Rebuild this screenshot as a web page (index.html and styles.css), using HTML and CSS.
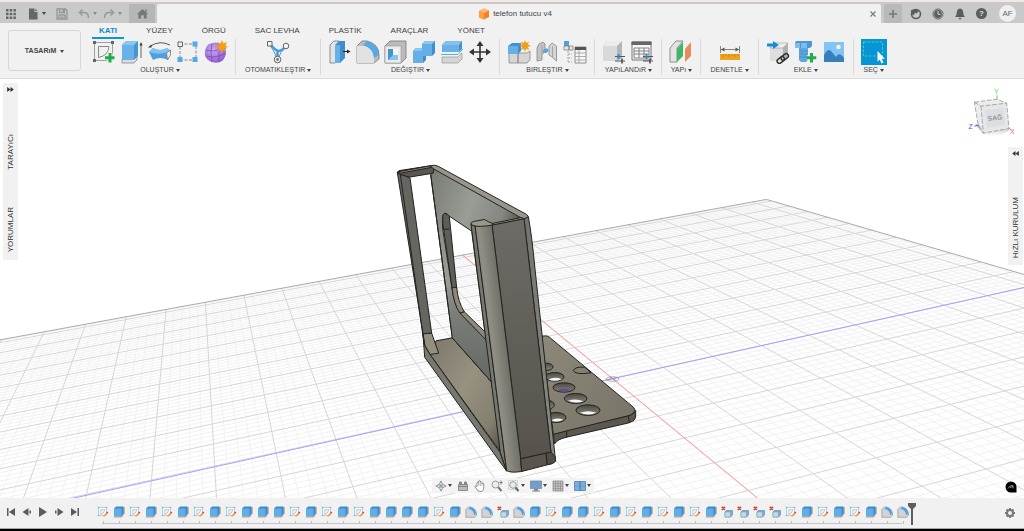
FILE: index.html
```html
<!DOCTYPE html>
<html lang="tr">
<head>
<meta charset="utf-8">
<title>telefon tutucu v4</title>
<link rel="stylesheet" href="styles.css">
</head>
<body>
<svg class="defs" aria-hidden="true">
  <defs>
    <radialGradient id="gPurple" cx=".4" cy=".35" r=".8"><stop offset="0" stop-color="#c9a6f2"/><stop offset="1" stop-color="#8454c4"/></radialGradient>
  </defs>
  <symbol id="sketch" viewBox="0 0 24 24"><path d="M2.500 2.500H20.500V20.500H2.500Z" fill="none" stroke="#8b8b8b" stroke-width=".8"/><path d="M6.500 6.500H17Q16.500 15.500 6.500 17.500Z" fill="none" stroke="#888"/><path d="M1 1h3v3h-3zM19 1h3v3h-3zM1 19h3v3h-3z" fill="#666"/><path d="M18 13v9.500M13 17.800h9.500" stroke="#f1f1f1" stroke-width="5"/><path d="M18 13v9.500M13 17.800h9.500" stroke="#22aa4f" stroke-width="3"/></symbol>
  <symbol id="extrude" viewBox="0 0 24 24"><path d="M2 19L7 16H17V20L14 23H2Z" fill="#dcdcdc" stroke="#888" stroke-width=".8"/><path d="M2 5L6 1H18V16L14 20H2Z" fill="#4796d2"/><path d="M2 5H14V20H2Z" fill="#69b1e8"/><path d="M2 5L6 1H18L14 5Z" fill="#8cc7f2"/><path d="M21 18V5" stroke="#444" stroke-width=".8"/><path d="M21 2l1.500 3.500h-3z" fill="#333"/></symbol>
  <symbol id="revolve" viewBox="0 0 24 24"><path d="M2.500 6Q12 0 22 5" fill="none" stroke="#444" stroke-width=".9"/><path d="M0 7.500l3.500-3v3z" fill="#333"/><path d="M1 12L5 8Q12 12 19 8L23 11L20 20Q12 16 5 20Z" fill="#4e9fda"/><path d="M1 12L5 8Q12 12 19 8L22 11Q12 16 1 12Z" fill="#83c2f0"/><path d="M18.500 13L22.500 10V15L19.500 20Z" fill="#eee" stroke="#777" stroke-width=".8"/></symbol>
  <symbol id="pattern" viewBox="0 0 24 24"><path d="M4 4H20V20H4Z" fill="none" stroke="#888" stroke-dasharray="3 1.500"/><path d="M2 2h4.500v4.500H2z" fill="#f1f1f1" stroke="#666"/><path d="M16.500 1.500h5v5h-5zM1.500 17h5v5h-5zM16.500 17h5v5h-5z" fill="#55a9e4"/></symbol>
  <symbol id="form" viewBox="0 0 24 24"><path d="M5 4Q11 1 18 4Q22 6 22 13Q21 20 16 22Q9 24 4 20Q0 17 1 11Q2 6 5 4Z" fill="url(#gPurple)"/><path d="M2 10Q9 12 15 10L22 8M15 4V22M8 4Q6 12 8 22M2 16Q9 18 15 16L21 14" fill="none" stroke="#7343b5" stroke-width=".7"/><path d="M18 0l1.400 3.500L23 2l-1.500 3.500L24 7l-3.400 1 1.400 3.500-3-1.500-1 3-1.300-3-3.200 1.500 1.500-3.500-3.500-1 3.500-1.500L13 2l3.600 1.500z" fill="#f59e14"/></symbol>
  <symbol id="auto" viewBox="0 0 24 24"><path d="M4 4Q9 10 12 11Q16 11 20 6M11.500 11V20" fill="none" stroke="#4b9bd6" stroke-width="2.500"/><path d="M4 5Q9 12 11 19M20 7Q14 12 12 19" fill="none" stroke="#4b9bd6" stroke-width="1"/><path d="M1.500 1.500h4.500v4.500h-4.500z" fill="#f5f5f5" stroke="#666"/><circle cx="20" cy="6" r="2.800" fill="#f5f5f5" stroke="#666"/><circle cx="11.500" cy="19.500" r="3.300" fill="#eee" stroke="#666"/><circle cx="11.500" cy="19.500" r="1.400" fill="#777"/></symbol>
  <symbol id="presspull" viewBox="0 0 24 24"><path d="M2 5L6 1H11V19L7 23H2Z" fill="#e4e4e4" stroke="#777" stroke-width=".8"/><path d="M7 5L11 1H17V18L12 23H7Z" fill="#3f8fcf"/><path d="M7 5H12V23H7Z" fill="#67b0e8"/><path d="M15 11.500H20" stroke="#222"/><path d="M19 9.500l3.500 2-3.500 2z" fill="#222"/></symbol>
  <symbol id="fillet" viewBox="0 0 24 24"><path d="M1 6L6 1H11Q23 4 23 15V19L18 23H1Z" fill="#bdbdbd" stroke="#777" stroke-width=".8"/><path d="M1 6H9Q18 8 18 16V23H1Z" fill="#e2e2e2"/><path d="M7 5L11 1Q22 4 23 15L18 18Q17 8 7 5Z" fill="#58a8e3"/></symbol>
  <symbol id="shell" viewBox="0 0 24 24"><path d="M1 6L6 1H22V18L17 23H1Z" fill="#bbb" stroke="#777" stroke-width=".8"/><path d="M1 6H17V23H1Z" fill="#ebebeb" stroke="#999" stroke-width=".6"/><path d="M4 9H14V20H4Z" fill="#4594d2"/><path d="M9 9H14V15H9Z" fill="#f6f6f6"/><path d="M4 20L9 15H14V20Z" fill="#86c3ef"/></symbol>
  <symbol id="combine" viewBox="0 0 24 24"><path d="M10 4L13 1H23V13L20 16H14V20L11 23H1V11L4 8H10Z" fill="#3f8fce"/><path d="M10 4H20V16H11V23H1V11H10Z" fill="#66afe6"/><path d="M10 4L13 1H23L20 4ZM1 11L4 8H10V11Z" fill="#8ac6f2"/></symbol>
  <symbol id="split" viewBox="0 0 24 24"><path d="M2 5L6 1H22V9L19 12H2Z" fill="#458fcc"/><path d="M2 5H19V12H2Z" fill="#69b1e8"/><path d="M2 5L6 1H22L19 5Z" fill="#83c1ef"/><path d="M1 14.500H18L23 9" fill="none" stroke="#5baae4"/><path d="M2 17H18L22 13V19L18 23H2Z" fill="#d5d5d5" stroke="#999" stroke-width=".7"/></symbol>
  <symbol id="move" viewBox="0 0 24 24"><path d="M12 4V20M4 12H20" stroke="#333" stroke-width="1.600"/><path d="M12 1l3.500 5H8.500zM12 23l3.500-5H8.500zM1 12l5-3.500v7zM23 12l-5-3.500v7z" fill="#333"/></symbol>
  <symbol id="newcomp" viewBox="0 0 24 24"><path d="M2 13H11V23H2ZM11 13H20L23 11V20L20 23H11Z" fill="#d6d6d6" stroke="#888" stroke-width=".8"/><path d="M1 6L5 3H14V11L11 14H1Z" fill="#3f91d0"/><path d="M1 6H11V14H1Z" fill="#66b0e8"/><path d="M18 0l1.200 3 3-1.500-1.400 3 3.200 1.300-3.200 1.200 1.400 3-3-1.300L18 12l-1.200-3.300-3 1.300 1.300-3L12 5.800l3.100-1.300-1.300-3 3 1.500z" fill="#f0a01e"/></symbol>
  <symbol id="joint" viewBox="0 0 24 24"><path d="M2 8Q3 3 8 2L10 4V12L7 14V20L2 21Z" fill="#c4c4c4" stroke="#888" stroke-width=".8"/><path d="M21.500 6L17 3L14 6V15L17 17L21.500 21Z" fill="#d4d4d4" stroke="#888" stroke-width=".8"/><path d="M7 5V14M17.500 6V17" stroke="#999" stroke-width=".8"/><path d="M8 10L12 8L14 11L11 13L8 13Z" fill="#59a6e0"/></symbol>
  <symbol id="bom" viewBox="0 0 24 24"><path d="M1 1h5v5H1z" fill="#4ea2de"/><path d="M1 6h5v4H1zM6 6h4v4H6z" fill="#e5e5e5" stroke="#777" stroke-width=".7"/><path d="M5 11V23M5 14H9M5 18H9M5 22H9" stroke="#999" stroke-width=".8" stroke-dasharray="2 1"/><path d="M12 7H23V23H12Z" fill="#f7f7f7" stroke="#777" stroke-width=".8"/><path d="M12 7H23V10H12Z" fill="#555"/><path d="M12 13H23M12 16.500H23M12 20H23M16 10V23" stroke="#999" stroke-width=".8"/></symbol>
  <symbol id="params" viewBox="0 0 24 24"><path d="M1 6L5 1H20V18L15 21H1Z" fill="#b5b5b5"/><path d="M1 6H15V21H1Z" fill="#d9d9d9"/><path d="M1 6L5 1H20L15 6Z" fill="#ececec"/><path d="M13 16.500H23M13 21H23" stroke="#555" stroke-width="1.200"/><path d="M16.500 14v5" stroke="#258fd4" stroke-width="2"/><path d="M20 18.500v5" stroke="#444" stroke-width="1.500"/></symbol>
  <symbol id="ptable" viewBox="0 0 24 24"><path d="M2 2H21V20H2Z" fill="#f7f7f7" stroke="#666" stroke-width=".9"/><path d="M1.500 1.500H21.500V5H1.500Z" fill="#666"/><path d="M4 8H19V18H4ZM4 11H19M4 14H19M9 8V18M14 8V18" fill="none" stroke="#777" stroke-width=".9"/><path d="M13 16.500H23M13 21H23" stroke="#555" stroke-width="1.200"/><path d="M16.500 14v5" stroke="#258fd4" stroke-width="2"/><path d="M20 18.500v5" stroke="#444" stroke-width="1.500"/></symbol>
  <symbol id="plane" viewBox="0 0 24 24"><path d="M1 8L7 1H14L8 8V22H1Z" fill="#e4e4e4" stroke="#777" stroke-width=".8"/><path d="M8 9L14 2V16L8 22Z" fill="#3cb765"/><path d="M16 9L22 2V16L16 22Z" fill="#e58d5a"/></symbol>
  <symbol id="measure" viewBox="0 0 24 24"><path d="M2.500 6V13M21.500 6V13M3 9.500H21" stroke="#777" stroke-width=".9"/><path d="M3 9.500l3.500-2v4zM21 9.500l-3.500-2v4z" fill="#555"/><path d="M2 14H22V20H2Z" fill="#f0a31c"/><path d="M5 14v3M8 14v2M11 14v3M14 14v2M17 14v3M20 14v2" stroke="#b67b10" stroke-width=".8"/></symbol>
  <symbol id="insert" viewBox="0 0 24 24"><path d="M4 8L8 3H22V16L17 21H4Z" fill="#b2b2b2"/><path d="M4 8H17V21H4Z" fill="#dedede"/><path d="M4 8L8 3H22L17 8Z" fill="#eee" stroke="#999" stroke-width=".6"/><path d="M1 5H8" stroke="#178cdb" stroke-width="3"/><path d="M7 1l6 4-6 4z" fill="#178cdb"/><g fill="none" stroke="#333" stroke-width="1.500" transform="rotate(-38 17 18)"><rect x="10" y="16" width="8" height="4.500" rx="2.200"/><rect x="15" y="16" width="8" height="4.500" rx="2.200"/></g></symbol>
  <symbol id="bolt" viewBox="0 0 24 24"><path d="M1 2L3 1H18V6L16 8H1Z" fill="#4a98d4"/><path d="M1 3H6V8H1ZM7 3H13V8H7Z" fill="#7cbdec"/><path d="M5 8H14V20L12 22H7L5 20Z" fill="#5ca8e1"/><path d="M5 11h9M5 14h9M5 17h9" stroke="#3f8bc8" stroke-width=".8"/><path d="M17.500 13v9.500M13 17.800h9.500" stroke="#f1f1f1" stroke-width="5"/><path d="M17.500 13v9.500M12.800 17.800h9.500" stroke="#22aa4f" stroke-width="3"/></symbol>
  <symbol id="image" viewBox="0 0 24 24"><path d="M2 2H22V22H2Z" fill="#81c4fa"/><path d="M2 15Q6 8 9 11L14 17Q17 11 22 18V22H2Z" fill="#367fb9"/><circle cx="16.500" cy="7" r="2.300" fill="#fff3c4"/></symbol>
  <symbol id="select" viewBox="0 0 26 26"><path d="M0 0H26V26H0Z" fill="#0696d7"/><path d="M2.500 3H21.500V17H2.500Z" fill="none" stroke="#55c8a0" stroke-dasharray="2.500 1.500"/><path d="M16.500 12V22.500L18.800 20.500L20.500 24.500L22.500 23.500L20.700 19.700H23.800Z" fill="#fff"/></symbol>

  <symbol id="t-s" viewBox="0 0 12 12"><path d="M1.500 1.500H9.500V9.500H1.500Z" fill="#f8fbfe" stroke="#8fc0e2" stroke-width=".7"/><path d="M3.800 3.800H7.800Q7 7.500 3.800 8.500Z" fill="none" stroke="#999" stroke-width=".6"/><path d="M6.500 10.500L10 6.800" stroke="#f5a623" stroke-width="1.600"/><path d="M9.700 7.200L10.800 6" stroke="#dd4535" stroke-width="1.600"/><path d="M.8.800h1.500v1.500H.8zM8.700.8h1.500v1.500H8.700zM.8 8.700h1.500v1.500H.8z" fill="#7fb7dd"/></symbol>
  <symbol id="t-e" viewBox="0 0 12 12"><path d="M1 9.500H8L10.500 8V9.500L8.500 11.500H1Z" fill="#aaa"/><path d="M1 2.500L3 .5H10.500V8L8.500 10H1Z" fill="#3e8bc8"/><path d="M1 2.500H8.500V10H1Z" fill="#60ade7"/><path d="M11 1V8" stroke="#555" stroke-width=".7"/></symbol>
  <symbol id="t-f" viewBox="0 0 12 12"><path d="M.8 3.500L3.500.800Q11 1.500 11.500 8V9.500L9.500 11.300H.8Z" fill="#d2d2d2" stroke="#888" stroke-width=".6"/><path d="M3.500 3L5.500.800Q11 2 11.500 8L9 9Q9 4 3.500 3Z" fill="#4ea3e0"/></symbol>
  <symbol id="t-c" viewBox="0 0 12 12"><path d="M.8.800L4 4M4 .8L.8 4" stroke="#d93b32" stroke-width="1.500"/><path d="M4 6L5.500 4.500H11.500V9L9.500 11H4Z" fill="#6ab0e1" stroke="#687f92" stroke-width=".6"/><path d="M4 6H9.500V11H4Z" fill="#bedcf1" stroke="#7890a5" stroke-width=".5"/></symbol>

  <symbol id="n-orbit" viewBox="0 0 12 12"><path d="M6 .5l1.500 2h-3zM6 11.500l1.500-2h-3zM.5 6l2-1.500v3zM11.500 6l-2-1.500v3z" fill="#888"/><ellipse cx="6" cy="6" rx="4" ry="1.800" fill="none" stroke="#999" stroke-width=".8"/><ellipse cx="6" cy="6" rx="1.800" ry="4" fill="none" stroke="#999" stroke-width=".8"/><circle cx="6" cy="6" r="1.100" fill="#4aa0df"/></symbol>
  <symbol id="n-look" viewBox="0 0 12 12"><path d="M1.500 4.500H10.500V10.500H1.500Z" fill="#bbb" stroke="#777" stroke-width=".8"/><path d="M2.500 2H4.500V4H2.500ZM7.500 2H9.500V4H7.500ZM1.500 6.500h9" stroke="#777" stroke-width=".8" fill="#999"/></symbol>
  <symbol id="n-pan" viewBox="0 0 12 12"><path d="M4 11L1 6.500Q1 5 3 6.500V2.500Q4 1.500 4.700 2.500V1Q5.500 0 6.300 1V2Q7.300 1 8 2.500V3.500Q9.500 2.500 9.800 4V8Q9.500 10 8 11.500Z" fill="#fff" stroke="#777" stroke-width=".8"/><path d="M4.700 2.500V6M6.300 2V6M8 3V6" stroke="#888" stroke-width=".6"/></symbol>
  <symbol id="n-zoom" viewBox="0 0 12 12"><path d="M7 7L10.500 11" stroke="#777" stroke-width="2"/><circle cx="4.500" cy="4.500" r="3.500" fill="#e6eef4" stroke="#999"/><path d="M10 .5v4M8.500 2.500h3" stroke="#666" stroke-width=".8"/></symbol>
  <symbol id="n-fit" viewBox="0 0 12 12"><path d="M.5.500h9v9h-9z" fill="none" stroke="#bbb" stroke-width=".8" stroke-dasharray="2 1"/><path d="M7 7L10.500 11" stroke="#666" stroke-width="2"/><circle cx="5" cy="5" r="3.300" fill="#dff0ea" stroke="#999"/></symbol>
  <symbol id="n-display" viewBox="0 0 12 12"><path d="M.5 1H11.500V8.500H.5Z" fill="#6aa0d4" stroke="#888" stroke-width=".8"/><path d="M4 9h4v1.500h2v1H2v-1h2z" fill="#888"/></symbol>
  <symbol id="n-grid" viewBox="0 0 12 12"><path d="M1 1H11V11H1Z" fill="#c4c4c4" stroke="#888" stroke-width=".8"/><path d="M3.500 1V11M6 1V11M8.500 1V11M1 3.500H11M1 6H11M1 8.500H11" stroke="#888" stroke-width=".6"/></symbol>
  <symbol id="n-views" viewBox="0 0 12 12"><path d="M.5 1.500H11.500V10.500H.5Z" fill="#79afe0" stroke="#567da2" stroke-width=".8"/><path d="M6 1.500V10.500" stroke="#4b6e91"/><path d="M1 6H11" stroke="#628db5" stroke-width=".6"/></symbol>
</svg>

<header class="titlebar">
  <div class="quick">
    <button class="q" aria-label="Veri paneli"><svg viewBox="0 0 12 12"><path d="M1 1h2.500v2.500H1zM4.700 1h2.500v2.500H4.700zM8.400 1h2.500v2.500H8.400zM1 4.700h2.500v2.500H1zM4.700 4.700h2.500v2.500H4.700zM8.400 4.700h2.500v2.500H8.400zM1 8.400h2.500v2.500H1zM4.700 8.400h2.500v2.500H4.700zM8.400 8.400h2.500v2.500H8.400z" fill="#666"/></svg></button>
    <button class="q wide" aria-label="Dosya"><svg viewBox="0 0 12 12"><path d="M2 .5H7.500V4H10.500V11.500H2Z" fill="#666"/><path d="M8.200.700L10.500 3H8.200Z" fill="#666"/></svg><i class="caret"></i></button>
    <button class="q" aria-label="Kaydet"><svg viewBox="0 0 12 12"><path d="M1 1H9.500L11 2.500V11H1ZM3.500 1V4.500H8.500V1M3 11V7H9V11" fill="none" stroke="#969696" stroke-width="1.300"/><path d="M4.500 8.500H7.500V10H4.500ZM6.500 1.500H8V4H6.500Z" fill="#969696"/></svg></button>
    <button class="q wide dim" aria-label="Geri al"><svg viewBox="0 0 12 12"><path d="M4.500 1.500L1.500 4.500L4.500 7.500M2 4.500H6.500Q10.500 5 10.500 10" fill="none" stroke="#999" stroke-width="1.500"/></svg><i class="caret"></i></button>
    <button class="q wide dim" aria-label="Yinele"><svg viewBox="0 0 12 12"><path d="M7.500 1.500L10.500 4.500L7.500 7.500M10 4.500H5.500Q1.500 5 1.500 10" fill="none" stroke="#999" stroke-width="1.500"/></svg><i class="caret"></i></button>
  </div>
  <button class="home" aria-label="Giriş"><svg viewBox="0 0 12 12"><path d="M6 1L12 6.500H10.500V11.500H7.500V8H4.500V11.500H1.500V6.500H0Z" fill="#777"/><path d="M9 1.500h1.500v3H9z" fill="#777"/></svg></button>
  <div class="doc">
    <span class="doc-name"><svg viewBox="0 0 12 12"><path d="M1 3L6 .5L11 2.500V9L6 11.500L1 9.500Z" fill="#f58220"/><path d="M1 3L6 5V11.500L1 9.500Z" fill="#ff9d45"/><path d="M1 3L6 .5L11 2.500L6 5Z" fill="#ffb878"/></svg>telefon tutucu v4</span>
    <button class="close" aria-label="Kapat"><svg viewBox="0 0 8 8"><path d="M1.500 1.500L6.500 6.500M6.500 1.500L1.500 6.500" stroke="#777" stroke-width="1.100"/></svg></button>
  </div>
  <button class="plus" aria-label="Yeni"><svg viewBox="0 0 10 10"><path d="M5 1V9M1 5H9" stroke="#777" stroke-width="1.600"/></svg></button>
  <div class="account">
    <button class="q" aria-label="Uzantılar"><svg viewBox="0 0 12 12"><circle cx="6" cy="6" r="4.500" fill="none" stroke="#5c5c5c" stroke-width="1.600"/><path d="M1 2L6 1L9 3L6.500 5.500Q4 4 4 7.500L1.500 6Z" fill="#5c5c5c"/></svg></button>
    <button class="q" aria-label="İş durumu"><svg viewBox="0 0 12 12"><circle cx="6" cy="6" r="5" fill="none" stroke="#666"/><circle cx="6" cy="6" r="3.900" fill="#5c5c5c"/><path d="M6 3V6.300H8.500" fill="none" stroke="#ddd"/></svg></button>
    <button class="q" aria-label="Bildirimler"><svg viewBox="0 0 12 12"><path d="M6 .5Q9.200 1 9.200 4.500Q9.200 7.500 11 9H1Q2.800 7.500 2.800 4.500Q2.800 1 6 .5ZM4.500 9.800H7.500Q7 11.500 6 11.500Q5 11.500 4.500 9.800Z" fill="#5c5c5c"/></svg></button>
    <button class="q help" aria-label="Yardım">?</button>
    <button class="avatar">AF</button>
  </div>
</header>

<section class="ribbon">
  <button class="workspace">TASARıM <i class="caret"></i></button>
  <div class="ribbon-main">
    <nav class="tabs">
      <button class="tab active">KATI</button><button class="tab">YÜZEY</button><button class="tab">ÖRGÜ</button><button class="tab">SAC LEVHA</button><button class="tab">PLASTİK</button><button class="tab">ARAÇLAR</button><button class="tab">YÖNET</button>
    </nav>
    <div class="groups" id="groups"></div>
  </div>
</section>

<main class="viewport">
  <svg class="scene" viewBox="0 78 1024 420" preserveAspectRatio="xMidYMid slice" aria-hidden="true">
    <defs>
      <linearGradient id="mPanel" gradientUnits="userSpaceOnUse" x1="152" y1="100" x2="430" y2="190"><stop offset="0" stop-color="#7b7d77"/><stop offset=".45" stop-color="#9a9c96"/><stop offset=".8" stop-color="#858680"/><stop offset="1" stop-color="#55544f"/></linearGradient>
      <linearGradient id="mPanelLow" x1="0" y1="0" x2="0" y2="1"><stop offset="0" stop-color="#6c6e6a" stop-opacity="0"/><stop offset=".5" stop-color="#757773"/><stop offset="1" stop-color="#666864"/></linearGradient>
      <linearGradient id="mCol" gradientUnits="userSpaceOnUse" x1="310" y1="590" x2="392" y2="580"><stop offset="0" stop-color="#77756c"/><stop offset=".35" stop-color="#918f85"/><stop offset="1" stop-color="#66675f"/></linearGradient>
      <linearGradient id="mFace" x1="0" y1="0" x2="0" y2="1"><stop offset="0" stop-color="#6c6b65"/><stop offset="1" stop-color="#57534c"/></linearGradient>
      <linearGradient id="mFloor" x1="0" y1="0" x2="1" y2="1"><stop offset="0" stop-color="#7c776a"/><stop offset=".45" stop-color="#979181"/><stop offset=".8" stop-color="#857f70"/><stop offset="1" stop-color="#544e45"/></linearGradient>
      <linearGradient id="mPlate" x1="0" y1="0" x2="1" y2="1"><stop offset="0" stop-color="#8d887a"/><stop offset="1" stop-color="#777366"/></linearGradient>
      <linearGradient id="mHole" x1="0" y1="0" x2="0" y2="1"><stop offset="0" stop-color="#4c4943"/><stop offset="1" stop-color="#8a867a"/></linearGradient>
      <linearGradient id="mSide" x1="0" y1="0" x2="1" y2="0"><stop offset="0" stop-color="#6f716c"/><stop offset="1" stop-color="#8b8d85"/></linearGradient>
    </defs>
    <path class="grid-minor" id="minor"/>
    <path class="grid-major" id="major"/>
    <path class="grid-edge" id="edge"/>
    <path class="axis-z" d="M72 498L1024 287"/>
    <path class="axis-x" d="M462 254L758 498"/>
    <g class="model" transform="translate(380 150) scale(.333333)">
      <path d="M485 557L497 556Q503 556 508 560L760 770Q772 782 750 795L560 843L520 852Z" fill="url(#mPlate)"/>
      <path d="M520 852L560 841L745 796Q766 789 767 780V800Q766 811 747 817L560 860Q532 866 524 880Z" fill="#5c5850"/>
      <path d="M560 841V860M745 797L748 816" fill="none"/>
      <path d="M633 667L614 650Q585 648 580 660Q584 674 633 667" fill="none"/>
      <g fill="url(#mHole)"><ellipse cx="500" cy="649" rx="19" ry="11"/><ellipse cx="524" cy="679" rx="28" ry="13"/><ellipse cx="552" cy="711" rx="33" ry="14"/><ellipse cx="587" cy="744" rx="34" ry="15"/><ellipse cx="624" cy="779" rx="36" ry="16"/><ellipse cx="504" cy="763" rx="19" ry="13"/><ellipse cx="528" cy="801" rx="30" ry="15"/></g>
      <g class="holes"><path d="M505 687Q525 677 545 686Q525 695 505 687ZM564 751Q588 742 610 752Q588 760 564 751ZM600 787Q625 777 649 787Q625 797 600 787ZM514 809Q530 799 550 808Q530 818 514 809Z" fill="#f5f5f5"/><path d="M532 719Q552 711 573 718Q552 727 532 719Z" fill="#55539b"/></g>
      <path d="M168 571L217 562L335 695L362 905L150 612Z" fill="url(#mFloor)"/>
      <path d="M152 72L160 52L432 203L336 224L340 695L335 695L217 562ZM188 235L216 412Q222 462 240 487L318 568L275 242L208 197Q196 183 190 192Q186 200 188 235Z" fill="url(#mPanel)" fill-rule="evenodd"/>
      <path class="soft" d="M196 400L214 400Q220 460 240 487L318 568L335 695L217 562Z" fill="url(#mPanelLow)"/>
      <path d="M217 562L335 695M152 72L217 562" fill="none"/>
      <path d="M191 236Q186 200 190 192Q196 183 208 198L230 412L216 412Z" fill="#5d5e59"/>
      <path d="M216 412L230 410Q234 454 253 484L240 488Q222 464 216 412Z" fill="#8d887b"/>
      <path d="M240 488L253 484L316 545L318 568Z" fill="#8d897c"/>
      <path d="M190 236L208 236" fill="none"/>
      <path d="M52 66L90 82L155 548L129 550Z" fill="#656660"/>
      <path d="M61 72L133 585" fill="none"/>
      <path d="M129 550L155 548L176 608L150 612L135 585Z" fill="#958f80"/>
      <path d="M129 550L134 585L150 612L360 906L380 962L134 620Z" fill="#77786f"/>
      <path d="M52 66Q53 61 60 60L150 46L162 52L160 68L88 80L58 71Z" fill="#595750"/>
      <path d="M54 64L150 46L158 50L62 68Z" fill="#8d897c"/>
      <path d="M150 46Q164 42 174 47L440 192Q448 198 442 204L432 207L162 56Z" fill="#98968a"/>
      <path d="M336 219L424 201L432 205L336 225Z" fill="#918d80"/>
      <path d="M432 205L445 199Q455 250 465 355L526 925L513 905Z" fill="url(#mSide)"/>
      <path d="M336 224L432 205L513 905L422 925Z" fill="url(#mFace)"/>
      <path d="M273 220L286 228L380 962L361 906Z" fill="#777970"/>
      <path d="M285 226L336 222L422 925L425 963Q390 968 380 960Z" fill="url(#mCol)"/>
      <path d="M273 222Q272 214 281 213L313 207L326 214L338 219L336 224Q295 230 283 226Z" fill="#9b9789"/>
      <path d="M422 925L498 908L502 943L425 963Z" fill="#59554d"/>
      <path d="M498 908L513 905L525 918L527 932Q520 941 502 943Z" fill="#504d46"/>
    </g>
    <g fill="none" stroke="#8c8aa0" stroke-width=".7"><ellipse cx="612.500" cy="378.500" rx="6.500" ry="2.200"/><path d="M607 379.500L617 377M610 376.500L616 380"/></g>
  </svg>

  <aside class="rail rail-left">
    <button class="arrows" aria-label="Genişlet"><svg viewBox="0 0 8 6"><path d="M0 0L4 3L0 6ZM4 0L8 3L4 6Z" fill="#333"/></svg></button>
    <button class="vert">TARAYıCı</button>
    <button class="vert">YORUMLAR</button>
  </aside>
  <aside class="rail rail-right">
    <button class="arrows" aria-label="Genişlet"><svg viewBox="0 0 8 6"><path d="M8 0L4 3L8 6ZM4 0L0 3L4 6Z" fill="#333"/></svg></button>
    <button class="vert">HıZLı KURULUM</button>
  </aside>

  <svg class="cube" viewBox="130 15 150 155" role="img" aria-label="Görünüm küpü">
    <defs><linearGradient id="cubeShade" x1="0" y1="0" x2="0" y2="1"><stop offset="0" stop-color="#888" stop-opacity=".8"/><stop offset="1" stop-color="#bbb" stop-opacity="0"/></linearGradient></defs>
    <path d="M155 130L178 160Q215 176 258 147L250 130Z" fill="url(#cubeShade)"/>
    <path d="M220 54V42" stroke="#5be05b" stroke-width="3"/><path d="M152 135L172 130" stroke="#5c5cf0" stroke-width="3"/><path d="M254 138L262 146" stroke="#f07070" stroke-width="3"/>
    <path d="M152 63L220 54L249 66L256 142L179 156L163 128Z" fill="#ececec"/>
    <path d="M172 75L249 66L256 142L179 156Z" fill="#e6e7e8"/>
    <path d="M152 63L220 54L249 66L256 142L179 156L163 128ZM152 63L172 75L249 66M172 75L179 156" fill="none" stroke="#858585" stroke-width="2" stroke-dasharray="14 5"/>
    <path d="M184 87L240 80L245 131L190 140Z" fill="#dcdee2"/>
    <text class="cube-face" x="214" y="117" transform="rotate(-7 214 110)">SAĞ</text>
    <text class="ax ax-y" x="218" y="40">Y</text><text class="ax ax-zz" x="141" y="144">Z</text><text class="ax ax-xx" x="266" y="159">X</text>
  </svg>

  <nav class="navbar">
    <button class="nb" aria-label="Yörünge"><svg><use href="#n-orbit"/></svg><i class="caret"></i></button>
    <button class="nb" aria-label="Bak"><svg><use href="#n-look"/></svg></button>
    <button class="nb" aria-label="Kaydır"><svg><use href="#n-pan"/></svg></button>
    <button class="nb" aria-label="Yakınlaştır"><svg><use href="#n-zoom"/></svg></button>
    <button class="nb" aria-label="Sığdır"><svg><use href="#n-fit"/></svg><i class="caret"></i></button>
    <button class="nb" aria-label="Görüntü"><svg><use href="#n-display"/></svg><i class="caret"></i></button>
    <button class="nb" aria-label="Izgara"><svg><use href="#n-grid"/></svg><i class="caret"></i></button>
    <button class="nb" aria-label="Görünümler"><svg><use href="#n-views"/></svg><i class="caret"></i></button>
  </nav>
  <button class="assistant" aria-label="Asistan"><svg viewBox="0 0 12 12"><path d="M6 .5A5.500 5.500 0 1 0 6 11.500H11.500V6A5.500 5.500 0 0 0 6 .5Z" fill="#000"/><path d="M3 7.500Q4.500 4 8 4.500V7.500M5 6.500L8 5.500" fill="none" stroke="#aaa" stroke-width=".8"/></svg></button>
</main>

<footer class="timeline">
  <div class="play">
    <button aria-label="Başa"><svg viewBox="0 0 12 12"><path d="M2 2h1.500v8H2zM10 2V10L4 6z"/></svg></button>
    <button aria-label="Geri"><svg viewBox="0 0 12 12"><path d="M7.500 2V10L1.500 6zM8.500 4.500h1.500v3H8.500z"/></svg></button>
    <button aria-label="Oynat"><svg viewBox="0 0 12 12"><path d="M2 1L10 6L2 11z"/></svg></button>
    <button aria-label="İleri"><svg viewBox="0 0 12 12"><path d="M4.500 2V10L10.500 6zM2 4.500h1.500v3H2z"/></svg></button>
    <button aria-label="Sona"><svg viewBox="0 0 12 12"><path d="M8.500 2H10v8H8.500zM2 2V10L8 6z"/></svg></button>
  </div>
  <div class="features" id="features"></div>
  <svg class="marker" viewBox="0 0 8 22"><path d="M0 0H8V3L5 6V22H3V6L0 3Z" fill="#5e5e5e"/></svg>
  <button class="gear" aria-label="Ayarlar"><svg viewBox="0 0 12 12"><circle cx="6" cy="6" r="3" fill="none" stroke="#777" stroke-width="2"/><path d="M6 1V3M6 9V11M1 6H3M9 6H11M2.500 2.500L3.900 3.900M8.100 8.100L9.500 9.500M9.500 2.500L8.100 3.900M3.900 8.100L2.500 9.500" stroke="#777" stroke-width="1.800"/></svg></button>
</footer>
<script src="app.js"></script>
</body>
</html>
```

FILE: styles.css
```css
* { box-sizing: border-box; }
html, body { height: 100%; }
body {
  margin: 0;
  display: flex;
  flex-direction: column;
  background: #fff;
  color: #444;
  font: 8px/10px "Liberation Sans", Arial, sans-serif;
  border-bottom: 2px solid #000;
  overflow: hidden;
}
button {
  margin: 0;
  padding: 0;
  border: 0;
  background: none;
  color: inherit;
  font: inherit;
  cursor: pointer;
}
svg { display: block; }
.defs { position: absolute; width: 0; height: 0; }
.caret {
  display: inline-block;
  border: 2px solid transparent;
  border-top: 3px solid #444;
  border-bottom: 0;
}

/* title bar */
.titlebar {
  flex: none;
  display: flex;
  height: 23px;
  padding-top: 2px;
  background: #c9c9c9;
  border-top: 2px solid #f1e9e6;
}
.quick { display: flex; align-items: center; gap: 10px; width: 129px; padding-left: 5px; }
.q { display: flex; align-items: center; justify-content: center; }
.q svg { width: 12px; height: 12px; }
.quick .wide { gap: 3px; }
.quick .wide + .wide { margin-left: -4px; }
.dim .caret { border-top-color: #8c8c8c; }
.home {
  width: 26px;
  display: grid;
  place-items: center;
  background: #b6b6b6;
  border-radius: 2px 2px 0 0;
}
.home svg { width: 11px; height: 11px; }
.doc {
  flex: 1;
  display: flex;
  align-items: center;
  margin-left: 2px;
  padding: 0 4px;
  background: #f1f1f1;
  border-radius: 2px 2px 0 0;
}
.doc-name { flex: 1; display: flex; align-items: center; justify-content: center; gap: 3px; }
.doc-name svg { width: 12px; height: 12px; }
.close svg { width: 8px; height: 8px; }
.plus {
  width: 18px;
  margin-left: 3px;
  display: grid;
  place-items: center;
  background: #b9b9b9;
  border-radius: 2px;
}
.plus svg { width: 10px; height: 10px; }
.account { display: flex; align-items: center; gap: 10px; padding: 0 8px; }
.help {
  width: 11px;
  height: 11px;
  border-radius: 50%;
  background: #5c5c5c;
  color: #ddd;
  font-weight: bold;
}
.avatar {
  width: 17px;
  height: 17px;
  margin-left: 2px;
  border-radius: 50%;
  background: #efefef;
  color: #666;
}

/* ribbon */
.ribbon {
  flex: none;
  display: flex;
  gap: 4px;
  height: 56px;
  padding-left: 8px;
  background: #f1f1f1;
  border-bottom: 1px solid #dcdcdc;
}
.workspace {
  width: 73px;
  height: 41px;
  margin-top: 7px;
  border: 1px solid #d6d6d6;
  border-radius: 3px;
  font-size: 7px;
  font-weight: bold;
}
.workspace .caret { margin-left: 2px; }
.ribbon-main { flex: 1; }
.tabs { display: flex; gap: 15px; height: 16px; padding-left: 7px; }
.tab { padding: 2px 7px 0; border-bottom: 2px solid transparent; }
.tab.active { border-bottom-color: #0a96d8; color: #0a8ad0; font-weight: bold; }
.groups { display: flex; }
.group {
  display: flex;
  flex-direction: column;
  align-items: center;
  padding: 0 7px;
  border-right: 1px solid #dadada;
  height: 36px;
}
.group.roomy { padding: 0 9px; }
.group:last-child { border: 0; }
.tools { display: flex; gap: 4px; height: 26px; align-items: center; }
.tool svg { width: 24px; height: 24px; }
.tool.active svg { width: 26px; height: 26px; }
.group-label { display: flex; align-items: center; gap: 2px; font-size: 7px; line-height: 10px; white-space: nowrap; }

/* 3D viewport */
.viewport { position: relative; flex: 1; min-height: 0; overflow: hidden; background: #fff; }
.scene { width: 100%; height: 100%; }
.grid-minor, .grid-major, .grid-edge, .axis-x, .axis-z { fill: none; }
.grid-minor { stroke: #f2f2f3; stroke-width: 1; }
.grid-major { stroke: #d6d6d7; stroke-width: 1; }
.grid-edge { stroke: #aaa; }
.axis-x { stroke: #ff9c9c; }
.axis-z { stroke: #a3a3ff; }
.model > path:not(.soft), .model > g:not(.holes) { stroke: #22221f; stroke-width: 3; stroke-linejoin: round; }

.rail {
  position: absolute;
  display: flex;
  flex-direction: column;
  align-items: center;
  width: 15px;
  background: #f1f1f1;
  color: #333;
}
.rail-left { left: 3px; top: 4px; height: 177px; padding: 4px 0 8px; }
.rail-right { right: 1px; top: 68px; height: 118px; padding: 4px 0 7px; }
.arrows svg { width: 7px; height: 5px; }
.arrows { display: block; }
.vert { writing-mode: vertical-rl; transform: rotate(180deg); line-height: 10px; }
.rail-left .arrows { margin-bottom: 42px; }
.rail-left .vert:last-child, .rail-right .vert:last-child { margin-top: auto; }

.cube { position: absolute; right: 7px; top: 7px; width: 50px; height: 52px; }
.cube text { font-family: "Liberation Sans", Arial, sans-serif; text-anchor: middle; }
.cube-face { font-size: 20px; font-weight: bold; fill: #92949b; }
.ax { font-size: 21px; }
.ax-y { fill: #54dc54; }
.ax-zz { fill: #4d4df0; }
.ax-xx { fill: #f06a6a; }

.navbar {
  position: absolute;
  left: 432px;
  bottom: 5px;
  display: flex;
  align-items: center;
  gap: 5px;
  height: 15px;
  padding: 0 3px;
  background: #f3f3f3;
}
.nb { display: flex; align-items: center; gap: 1px; }
.nb svg { width: 12px; height: 12px; }
.assistant { position: absolute; right: 7px; bottom: 5px; }
.assistant svg { width: 12px; height: 12px; }

/* timeline */
.timeline {
  flex: none;
  display: flex;
  align-items: flex-start;
  height: 31px;
  padding: 5px 8px 0 5px;
  background: #f1f1f1;
  border-bottom: 1px solid #aaa;
}
.play { display: flex; gap: 4px; padding-top: 3px; }
.play svg { width: 12px; height: 12px; fill: #5b5b5b; }
.features { display: flex; padding-left: 14px; }
.step { width: 16px; height: 21px; padding-top: 3px; background: linear-gradient(#c4c4c4, #c4c4c4) 0 100% / 100% 1px no-repeat; }
.step:first-child { background-position: 7px 100%; }
.step:last-child { background-size: 7px 1px; }
.step svg { width: 12px; height: 12px; margin: 0 auto; }
.step::after { content: ""; display: block; width: 1px; height: 3px; margin: 3px auto 0; background: #bdbdbd; }
.marker { flex: none; width: 8px; height: 22px; margin-left: -3px; }
.gear { margin: 4px 0 0 auto; }
.gear svg { width: 12px; height: 12px; }
```

FILE: app.js
```js
const groups = [
  ["OLUŞTUR", ["sketch", "extrude", "revolve", "pattern", "form"]],
  ["OTOMATIKLEŞTIR", ["auto"], "roomy"],
  ["DEĞIŞTIR", ["presspull", "fillet", "shell", "combine", "split", "move"]],
  ["BIRLEŞTIR", ["newcomp", "joint", "bom"]],
  ["YAPıLANDıR", ["params", "ptable"]],
  ["YAPı", ["plane"]],
  ["DENETLE", ["measure"], "roomy"],
  ["EKLE", ["insert", "bolt", "image"]],
  ["SEÇ", ["select"]],
];
document.getElementById("groups").innerHTML = groups.map(([label, tools, mod = ""]) =>
  `<div class="group ${mod}"><div class="tools">${tools.map(t =>
    `<button class="tool${t === "select" ? " active" : ""}" aria-label="${t}"><svg><use href="#${t}"/></svg></button>`).join("")}</div>` +
  `<button class="group-label">${label}<i class="caret"></i></button></div>`).join("");

const steps = "sesesesesee" + "esesesee" + "eesef" + "fcfesee" + "sesesesecccc" + "sesese" + "ff";
document.getElementById("features").innerHTML = [...steps].map(k =>
  `<button class="step" aria-label="İşlem"><svg><use href="#t-${k}"/></svg></button>`).join("");

// Ground grid: projective map with one vanishing point per axis.
const O = [612, 378], VZ = [4684, -519], VX = [190, 31];
const DZ = 0.0127, DX = 0.0488, MAXZ = 0.1205, MAXX = 0.551, MINZ = -0.30, MINX = -0.62;
const point = (s, t) => {
  const w = 1 + s + t;
  return [0, 1].map(i => ((O[i] + s * VZ[i] + t * VX[i]) / w).toFixed(1)).join(" ");
};
let minor = "", major = "";
const collect = (step, min, max, segment) => {
  for (let i = Math.ceil(min / step * 5); i <= max / step * 5; i++) {
    const d = segment(i * step / 5);
    if (i % 5) minor += d; else major += d;
  }
};
collect(DZ, MINZ, MAXZ, s => `M${point(s, MINX)}L${point(s, MAXX)}`);
collect(DX, MINX, MAXX, t => `M${point(MINZ, t)}L${point(MAXZ, t)}`);
document.getElementById("minor").setAttribute("d", minor);
document.getElementById("major").setAttribute("d", major);
document.getElementById("edge").setAttribute("d", `M${point(MINZ, MAXX)}L${point(MAXZ, MAXX)}L${point(MAXZ, MINX)}`);
```
